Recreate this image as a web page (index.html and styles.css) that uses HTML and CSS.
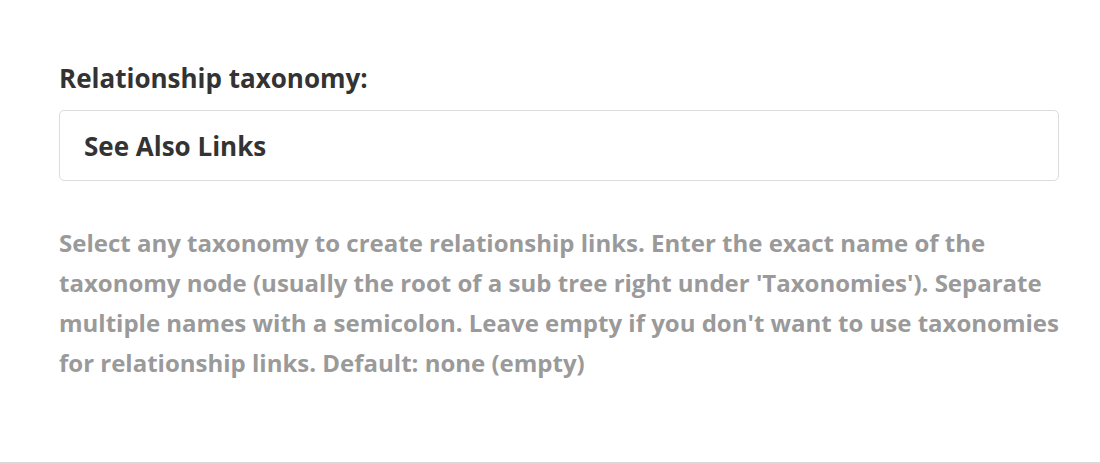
FILE: index.html
```html
<!DOCTYPE html>
<html>
<head>
<meta charset="utf-8">
<link rel="stylesheet" href="styles.css">
</head>
<body>
<div class="field">
  <div class="label">Relationship taxonomy:</div>
  <div class="input">See Also Links</div>
  <p class="help">Select any taxonomy to create relationship links. Enter the exact name of the taxonomy node (usually the root of a sub tree right under 'Taxonomies'). Separate multiple names with a semicolon. Leave empty if you don't want to use taxonomies for relationship links. Default: none (empty)</p>
</div>
</body>
</html>
```
FILE: styles.css
```css
html, body {
  margin: 0;
  padding: 0;
  background: #fff;
}
body {
  font-family: "Open Sans", "Liberation Sans", sans-serif;
  font-weight: 700;
  width: 1100px;
  height: 464px;
  overflow: hidden;
}
.field {
  box-sizing: border-box;
  height: 464px;
  padding: 58px 41px 0 59px;
  border-bottom: 2px solid #d9d9d9;
}
.label {
  font-size: 26px;
  line-height: 40px;
  color: #333;
}
.input {
  box-sizing: border-box;
  margin-top: 12px;
  height: 71px;
  border: 1px solid #dcdcdc;
  border-radius: 5px;
  padding: 1px 24px 0;
  display: flex;
  align-items: center;
  font-size: 26px;
  line-height: 40px;
  color: #333;
}
.help {
  margin: 42px 0 0;
  font-size: 24px;
  line-height: 40px;
  color: #9a9a9a;
}
```
